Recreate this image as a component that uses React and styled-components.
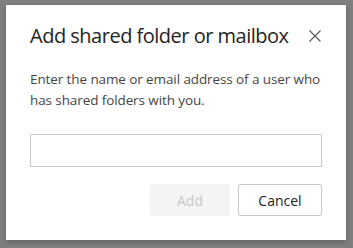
import React from 'react';
import styled, { createGlobalStyle } from 'styled-components';

const GlobalStyle = createGlobalStyle`
  html, body {
    margin: 0;
    padding: 0;
    background: #808080;
  }
  body {
    font-family: "Open Sans", "Noto Sans", sans-serif;
  }
`;

const Overlay = styled.div`
  width: 353px;
  height: 248px;
  box-sizing: border-box;
  padding: 5px 7px 8px 6px;
  background: #808080;
`;

const Dialog = styled.div`
  height: 100%;
  box-sizing: border-box;
  background: #fff;
  padding: 17px 24px 0 24px;
  box-shadow: 0 2px 6px rgba(0, 0, 0, 0.25);
  display: flex;
  flex-direction: column;
`;

const Header = styled.div`
  display: flex;
  align-items: center;
  justify-content: space-between;
`;

const Title = styled.h1`
  margin: 0;
  font-size: 20px;
  font-weight: 400;
  line-height: 28px;
  letter-spacing: -0.5px;
  color: #252424;
`;

const CloseButton = styled.button`
  border: none;
  background: none;
  padding: 0;
  width: 16px;
  height: 16px;
  display: flex;
  align-items: center;
  justify-content: center;
  margin-right: -1px;
  cursor: pointer;
`;

const Description = styled.p`
  margin: 19px 0 0;
  font-size: 13.5px;
  line-height: 21px;
  letter-spacing: -0.1px;
  color: #484644;
`;

const Input = styled.input`
  margin-top: 23px;
  height: 33px;
  box-sizing: border-box;
  border: 1px solid #c8c8c8;
  outline: none;
  padding: 0 8px;
  font: inherit;
`;

const Footer = styled.div`
  display: flex;
  justify-content: flex-end;
  gap: 8px;
  margin-top: 17px;
`;

const Button = styled.button`
  height: 32px;
  width: ${p => p.$width}px;
  box-sizing: border-box;
  font-family: inherit;
  font-size: 14px;
  font-weight: 500;
  border: 1px solid ${p => (p.$disabled ? '#f4f4f4' : '#c8c8c8')};
  background: ${p => (p.$disabled ? '#f4f4f4' : '#fff')};
  color: ${p => (p.$disabled ? '#c8c8c8' : '#252424')};
  border-radius: 2px;
  padding: 0;
`;

const CloseIcon = () => (
  <svg width="12" height="12" viewBox="0 0 12 12">
    <path d="M0.5 0.5 L11.5 11.5 M11.5 0.5 L0.5 11.5" stroke="#555" strokeWidth="1.1" fill="none" />
  </svg>
);

export default function App() {
  return (
    <>
      <GlobalStyle />
      <Overlay>
        <Dialog>
          <Header>
            <Title>Add shared folder or mailbox</Title>
            <CloseButton aria-label="Close">
              <CloseIcon />
            </CloseButton>
          </Header>
          <Description>
            Enter the name or email address of a user who has shared folders with you.
          </Description>
          <Input type="text" />
          <Footer>
            <Button $width={80} $disabled disabled>Add</Button>
            <Button $width={84}>Cancel</Button>
          </Footer>
        </Dialog>
      </Overlay>
    </>
  );
}
